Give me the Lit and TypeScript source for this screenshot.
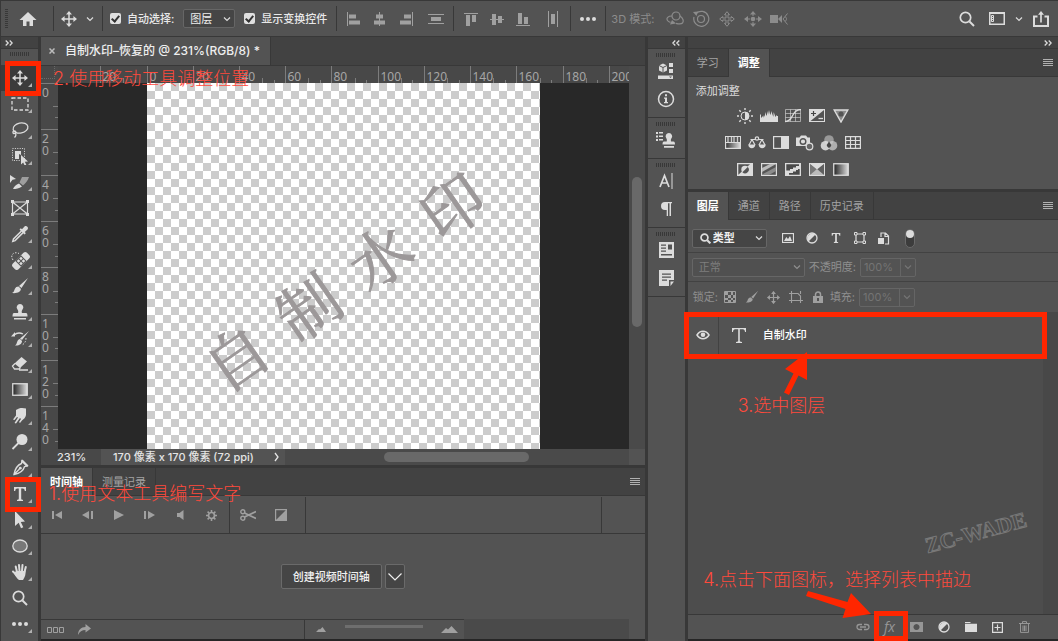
import { LitElement, html, svg, css, TemplateResult } from "lit";
import { customElement, property } from "lit/decorators.js";

/* ---------- icon artwork, keyed by name: [width, height, content] ---------- */
type Art = [number, number, TemplateResult];

const arrows4 = svg`<path d="M8 1v14M1 8h14" stroke="currentColor" stroke-width="1.5"/><path d="M8 0l3 3.6H5zM8 16l3-3.6H5zM0 8l3.6-3v6zM16 8l-3.6-3v6z" fill="currentColor"/>`;
const half = svg`<circle cx="7" cy="7" r="5" fill="none" stroke="currentColor" stroke-width="1.3"/><path d="M3.5 10.5A5 5 0 0 1 10.500 3.500z" fill="currentColor"/>`;

const ART: Record<string, Art> = {
  home: [18, 16, svg`<path fill="currentColor" d="M9 1l8.500 8H14v6h-3.500v-4.500h-3V15H4V9H.5z"/>`],
  move: [16, 16, arrows4],
  chev: [8, 6, svg`<path d="M1 1.500l3 3 3-3" fill="none" stroke="currentColor" stroke-width="1.200"/>`],
  bigchev: [14, 8, svg`<path d="M.5.5L7 7l6.500-6.500" fill="none" stroke="currentColor" stroke-width="1.200"/>`],
  fwd: [6, 10, svg`<path d="M1 1l3 4-3 4" fill="none" stroke="currentColor" stroke-width="1.300"/>`],
  dblR: [8, 6, svg`<path d="M.7.5L3.200 3 .7 5.500M4.700.5L7.200 3 4.700 5.500" fill="none" stroke="currentColor" stroke-width="1.300"/>`],
  dblL: [8, 6, svg`<path d="M3.300.5L.8 3l2.500 2.500M7.300.5L4.800 3l2.500 2.500" fill="none" stroke="currentColor" stroke-width="1.300"/>`],
  menu: [10, 8, svg`<path d="M0 .5h10M0 2.500h10M0 4.500h10M0 6.500h10" stroke="currentColor"/>`],
  close: [6, 6, svg`<path d="M.5.5l5 5M5.500.5l-5 5" stroke="currentColor" stroke-width="1.500"/>`],
  alL: [14, 14, svg`<path d="M.5 0v14" stroke="currentColor"/><path fill="currentColor" d="M2 2.500h7v4H2zM2 8.500h11v4H2z"/>`],
  alC: [14, 14, svg`<path d="M6.500 0v14" stroke="currentColor"/><path fill="currentColor" d="M3 2.500h7v4H3zM1 8.500h11v4H1z"/>`],
  alR: [14, 14, svg`<path d="M13.500 0v14" stroke="currentColor"/><path fill="currentColor" d="M5 2.500h7v4H5zM1 8.500h11v4H1z"/>`],
  disV: [16, 12, svg`<path d="M0 1.500h16M0 10.500h16" stroke="currentColor"/><path fill="currentColor" d="M3 4h10v4H3z"/>`],
  alT: [14, 14, svg`<path d="M0 1.500h14" stroke="currentColor"/><path fill="currentColor" d="M2 3h4v11H2zM8 3h4v7H8z"/>`],
  alM: [14, 14, svg`<path d="M0 7.500h14" stroke="currentColor"/><path fill="currentColor" d="M2 2h4v11H2zM8 4h4v7H8z"/>`],
  alB: [14, 14, svg`<path d="M0 13.500h14" stroke="currentColor"/><path fill="currentColor" d="M2 1h4v11H2zM8 5h4v7H8z"/>`],
  disH: [10, 16, svg`<path d="M.5 0v16M9.500 0v16" stroke="currentColor"/><path fill="currentColor" d="M3 3h4v10H3z"/>`],
  dots: [16, 4, svg`<circle cx="2" cy="2" r="2" fill="currentColor"/><circle cx="8" cy="2" r="2" fill="currentColor"/><circle cx="14" cy="2" r="2" fill="currentColor"/>`],
  orbit: [18, 16, svg`<g fill="none" stroke="currentColor" stroke-width="1.200"><circle cx="10" cy="5" r="4"/><path d="M6 5C2 5 0 7 1.500 9.500c.6 1 1.500 1.500 3 1.800M14 5c3 2 4 5 2.500 7-1 1-4 1-6.500.3"/></g><path d="M6 9l4 3.500-6 1z" fill="currentColor"/>`],
  roll: [18, 18, svg`<g fill="none" stroke="currentColor" stroke-width="1.200"><circle cx="9" cy="9" r="3.500"/><path d="M4 3.500A7.500 7.500 0 1 1 2 7"/></g><path d="M1 2l5-.5L4.500 6z" fill="currentColor"/>`],
  pan3: [16, 16, svg`<path d="M8 .7l2.500 3H9v3.300h3.300V5.500l3 2.500-3 2.500V9H9v3.300h1.500l-2.500 3-2.500-3H7V9H3.700v1.500L.7 8l3-2.500V7H7V3.700H5.500z" fill="none" stroke="currentColor"/>`],
  slide3: [18, 16, svg`<g fill="currentColor"><path d="M9 0l3 3.500H6zM9 16l3-3.500H6zM0 8l4-3v6zM18 8l-4-3v6z"/><circle cx="9" cy="8" r="2.300"/><path d="M8.500 2h1v3h-1zM8.500 11h1v3h-1zM3 7.500h3v1H3zM12 7.500h3v1h-3z"/></g>`],
  cam3: [18, 12, svg`<path fill="currentColor" d="M0 2h8v8H0zM8 6l4-4v8z"/><path d="M17.500.5L13 6l4.500 5.500M15 3.500c2 1.500 2 3.500 0 5" fill="none" stroke="currentColor"/>`],
  search: [16, 16, svg`<circle cx="6.500" cy="6.500" r="5.200" fill="none" stroke="currentColor" stroke-width="1.700"/><path d="M10.500 10.500L15 15" stroke="currentColor" stroke-width="2"/>`],
  work: [16, 13, svg`<rect x=".75" y=".75" width="14.500" height="11.500" fill="none" stroke="currentColor" stroke-width="1.500"/><path d="M0 0h16v2H0z" fill="currentColor"/><path fill="none" stroke="currentColor" d="M2.500 3.500h2v2h-2zM2.500 5.500h2v2h-2zM2.500 7.500h2v2h-2z"/>`],
  share: [16, 16, svg`<path d="M4.500 5.500H1V15h14V5.500h-3.500" fill="none" stroke="currentColor" stroke-width="2"/><path d="M8 11.500V2" stroke="currentColor" stroke-width="1.700"/><path d="M8 0l3 3.800H5z" fill="currentColor"/>`],
  marquee: [18, 14, svg`<rect x="1" y="1" width="16" height="12" fill="none" stroke="currentColor" stroke-width="1.300" stroke-dasharray="3.500 2"/>`],
  lasso: [18, 18, svg`<g fill="none" stroke="currentColor" stroke-width="1.300"><ellipse cx="9.500" cy="7" rx="7.500" ry="5" transform="rotate(-12 9.500 7)"/><path d="M3 9.500c-2 1.500-1 3.500.7 3s1.600-2.500-.4-2.500M4 12c1.500 1 1 3-.5 4.500"/></g>`],
  quick: [18, 18, svg`<rect x="1.500" y="1.500" width="12" height="12" fill="none" stroke="currentColor" stroke-dasharray="1 1.400"/><path fill="currentColor" d="M4 4h6v4L8 7v5H4z"/><path fill="currentColor" d="M10 8l7 6.500-3.200.3 1.500 3-1.700.7-1.400-3L10 17.500z"/>`],
  slice: [20, 16, svg`<path fill="currentColor" d="M0 1l6 4-3.500.7L0 9zM9 9.500l3 3c-3 2-6 2.500-9 2.500 1-2.500 3-4.500 6-5.500z"/><path d="M9.500 8.500L12 3h7c-1 3-3 6-6 8.500z" fill="currentColor" opacity=".55"/>`],
  frame: [18, 16, svg`<path d="M1.500 2h15v12h-15zM1.500 2l15 12M16.500 2l-15 12" fill="none" stroke="currentColor" stroke-width="1.200"/><path fill="currentColor" d="M0 0h3v3H0zM15 0h3v3h-3zM0 13h3v3H0zM15 13h3v3h-3z"/>`],
  dropper: [18, 18, svg`<path d="M10.500 6l-8 8-.7 2.300 2.300-.7 8-8" fill="none" stroke="currentColor" stroke-width="1.500"/><path fill="currentColor" d="M8.500 4.500l1.300-1.300 1.200 1 2.500-2.700c2-1.600 4.500 1 3 3l-2.700 2.500 1 1.200-1.300 1.300z"/>`],
  heal: [20, 20, svg`<path d="M3 10C-.5 5 4 1 9 3.500" fill="none" stroke="currentColor" stroke-dasharray="1.500 1.500"/><g transform="rotate(-45 11 11)"><rect x="1" y="7" width="20" height="8" rx="2.500" fill="currentColor"/><rect x="7" y="7" width="8" height="8" fill="#535353"/><g fill="currentColor"><path d="M8 8h2.500v2.500H8zM11.500 8H14v2.500h-2.500zM8 11.500h2.500V14H8zM11.500 11.500H14V14h-2.500z"/></g></g>`],
  brush: [18, 18, svg`<path fill="currentColor" d="M17 1l-6.500 10-2.500-2zM7.500 9.500l2.300 2.200c.5 3-4 5-8.800 4.300 2-.8 2-2 2.800-4 .7-1.700 2-2.500 3.700-2.500z"/>`],
  stamp: [16, 18, svg`<path fill="currentColor" d="M8 1a3.300 3.300 0 0 1 2.500 5.500C9.500 8 9.600 9 10 10h4c1 0 1.500 1 1.500 3.500H.5C.5 11 1 10 2 10h4c.4-1 .5-2-.5-3.500A3.300 3.300 0 0 1 8 1zM2 15h12v1.600H2z"/>`],
  histb: [20, 18, svg`<path fill="currentColor" d="M19 2l-7 9-2-1.500zM10 10l2 2c0 3-3 5-7 4.500 1.500-1 1.500-2 2.300-4 .5-1.500 1.500-2.500 2.700-2.500zM5 3v4.500H1z"/><path d="M4 6c3-2.500 6-2.500 9-1" fill="none" stroke="currentColor" stroke-width="1.300"/><path d="M16 9c0 4-2 6-4 7" fill="none" stroke="currentColor" stroke-dasharray="1.500 1.500"/>`],
  eraser: [18, 16, svg`<path fill="currentColor" d="M10.500 1L16 5.500l-7 6.500L3.500 7.500z"/><path d="M4 7.500L1.500 10l2 3H8l1.500-1.500M8 14h9" fill="none" stroke="currentColor" stroke-width="1.300"/>`],
  grad: [16, 14, svg`<defs><linearGradient id="gr"><stop offset="0" stop-color="#222"/><stop offset="1" stop-color="#ddd"/></linearGradient></defs><rect x=".75" y=".75" width="14.500" height="11.500" fill="url(#gr)" stroke="currentColor" stroke-width="1.300"/>`],
  smudge: [16, 18, svg`<path fill="currentColor" d="M4 3c3-2.500 7-2.500 10-1.500V8c-.5 2.500-2 4-4 5.500l-2 2.500-1-1 2-3-1-1-4 5.500-1.500-.5L6 10.500 5 10l-2.500 3L1 12.500 4 8.500z"/>`],
  dodge: [18, 18, svg`<circle cx="11" cy="6.500" r="5.500" fill="currentColor"/><path d="M7.500 10L1.500 16" stroke="currentColor" stroke-width="1.800"/>`],
  pen: [18, 18, svg`<path d="M11 2l5 5-2.500.7c-1 4-5 6.800-10.500 7.800C4 10 6.500 6 10.500 4.500zM3 15.500L8.500 10" fill="none" stroke="currentColor" stroke-width="1.400"/><circle cx="9.300" cy="9.200" r="1.400" fill="currentColor"/><path fill="currentColor" d="M11.500.5l6 6-1.500 1.500-6-6z"/>`],
  type: [14, 14, svg`<path fill="currentColor" d="M1 0h12v4h-1.200c-.2-1.700-.8-2.500-2.300-2.500H8.200v10c0 1 .4 1.200 1.800 1.300V14H4v-1.200c1.400-.1 1.800-.3 1.800-1.300v-10H4.500C3 1.500 2.400 2.300 2.200 4H1z"/>`],
  pick: [14, 18, svg`<path fill="currentColor" d="M2 0l10 10.500-4.200.4 2.500 5.300-2.300 1-2.300-5.400L2 15z"/>`],
  ell: [16, 14, svg`<ellipse cx="8" cy="7" rx="7.200" ry="6" fill="#787878" stroke="currentColor" stroke-width="1.300"/>`],
  hand: [18, 18, svg`<g stroke="currentColor" stroke-width="2" stroke-linecap="round"><path d="M6 9L4.700 3.500M8.500 8L8 2M11 8l.5-6M13.500 9l1.300-5M5.500 12L2 8.500"/></g><path fill="currentColor" d="M5 8h9.500c.3 3.500-.5 6-2.500 9H8c-2-1.500-4-4.500-5-6.500z"/>`],
  tri: [4, 4, svg`<path d="M4 0v4H0z" fill="currentColor"/>`],
  props: [16, 16, svg`<path d="M5 .5L9 2.500v5L5 9.500l-4-2v-5z" fill="currentColor"/><path d="M1 2.500l4 2 4-2M5 4.500v5" stroke="#535353" fill="none"/><path fill="currentColor" d="M11 0h4v4h-4zM11 6h4v4h-4zM0 12.500h15V16H0z"/><path d="M11 13.500h3l-1.500 1.500z" fill="#535353"/>`],
  info: [18, 18, svg`<circle cx="9" cy="9" r="7.500" fill="none" stroke="currentColor" stroke-width="1.500"/><path fill="currentColor" d="M8 4.200h2v2H8zM7 7.500h3V12h1v1.200H7V12h1V8.700H7z"/>`],
  clone: [20, 16, svg`<path fill="currentColor" d="M13 1a3.300 3.300 0 0 1 2.500 5.300c-.8 1-.7 2-.5 3.200h2.500c1 0 1.500 1 1.500 3H6.500c0-2 .5-3 1.500-3h2.700c.3-1.200.3-2.200-.4-3.200A3.300 3.300 0 0 1 13 1zM8 14h10v1.800H8z"/><path fill="currentColor" d="M0 0h2v2H0zM3 0h4v1.500H3zM0 3.500h2v2H0zM3 3.500h4V5H3zM0 7h2v2H0zM3 7h4v1.500H3z"/>`],
  charp: [14, 16, svg`<path d="M1 14L5.500 2.500 10 14M2.800 10h5.400" fill="none" stroke="currentColor" stroke-width="1.700"/><path d="M13 0v16" stroke="currentColor"/>`],
  para: [12, 16, svg`<path fill="currentColor" d="M5 1h7v1.200h-1V15H9.500V2.200H8V15H6.700V9H5a4 4 0 0 1 0-8z"/>`],
  lib: [15, 16, svg`<path fill="currentColor" fill-rule="evenodd" d="M0 0h15v16H0zM2 2.500v1.200h5V2.500zM2 5.500v1.200h5V5.500zM2 8.500v1.200h5V8.500zM9 2.500v5h4v-5zM2 12v1.500h11V12z"/>`],
  note: [15, 16, svg`<path fill="currentColor" fill-rule="evenodd" d="M0 0h15v10l-5 0v6H0zM3 3.500v1.200h9V3.500zM3 6.500v1.200h9V6.500zM3 9.500v1.200h5V9.500zM11.500 11.500H15L11.500 16z"/>`],
  sun: [18, 16, svg`<g stroke="currentColor" stroke-width="1.400"><path d="M9 0v2M9 14v2M1 8h2M15 8h2M3.300 2.300l1.500 1.500M13.200 12.200l1.500 1.500M3.300 13.700l1.500-1.500M13.200 3.800l1.500-1.500"/></g><circle cx="9" cy="8" r="4" fill="none" stroke="currentColor"/><path d="M9 4a4 4 0 0 1 0 8z" fill="currentColor"/>`],
  levels: [18, 12, svg`<path fill="currentColor" d="M0 12V5l1-1v4l2-2v2l1-3 1 2V2l1.500 4L8 1v4l1-5 1.200 5L12 1v5l1.500-4v5L15 3v4l2-2v1h1v6z"/>`],
  curves: [16, 14, svg`<path d="M.5.5h15v12H.5zM5.500.5v12M10.500.5v12M.5 4.500h15M.5 8.500h15" fill="none" stroke="currentColor" opacity=".6"/><path d="M0 12.500c9 0 6-12 16-12" fill="none" stroke="currentColor" stroke-width="1.300"/>`],
  expo: [16, 13, svg`<path fill="currentColor" d="M0 0h16v13H0z"/><path d="M15 1v11H1.500z" fill="#535353"/><path d="M2 4.500h5M4.500 2v5" stroke="#444" stroke-width="1.200"/><path d="M9.500 9.500H14" stroke="currentColor" stroke-width="1.300"/>`],
  vib: [16, 14, svg`<path d="M1.200 1h13.600L8 13z" fill="#8a8a8a" stroke="currentColor" stroke-width="1.400"/><circle cx="8" cy="5" r="2.600" fill="#555"/>`],
  hue: [16, 13, svg`<defs><linearGradient id="gr2"><stop offset="0" stop-color="#333"/><stop offset="1" stop-color="#ddd"/></linearGradient></defs><rect x=".6" y=".6" width="14.800" height="11.800" fill="url(#gr2)" stroke="currentColor" stroke-width="1.200"/><path d="M1 1h14v5H1z" fill="#555"/><path d="M3 1v5M6.500 1v5M9 1v5M12.500 1v5" stroke="#ccc" stroke-width="1.300"/><path d="M1 6.500h14" stroke="currentColor"/>`],
  balance: [18, 14, svg`<g fill="none" stroke="currentColor" stroke-width="1.200"><circle cx="9" cy="2.500" r="1.700"/><path d="M2.500 3.500h5M10.500 3.500h5M4 3.500L1 9M4 3.500L7 9M14 3.500L11 9M14 3.500L17 9"/></g><path fill="currentColor" d="M.3 8.500h7c0 5-7 5-7 0zM10.700 8.500h7c0 5-7 5-7 0z"/>`],
  bw: [16, 13, svg`<rect x=".6" y=".6" width="14.800" height="11.800" fill="none" stroke="currentColor" stroke-width="1.200"/><path fill="currentColor" d="M8 0h8v13H8z"/>`],
  photo: [18, 16, svg`<path fill="currentColor" d="M0 2.500h3.500L5 .5h5l1.500 2H14V11H0z"/><circle cx="7" cy="6.500" r="2.800" fill="currentColor" stroke="#535353" stroke-width="1.400"/><circle cx="13.500" cy="11.500" r="3.300" fill="#666" stroke="currentColor" stroke-width="1.200"/>`],
  mixer: [18, 16, svg`<circle cx="9" cy="5" r="4.800" fill="#999"/><circle cx="5.500" cy="10.700" r="4.800" fill="#ddd" opacity=".9"/><circle cx="12.500" cy="10.700" r="4.800" fill="#ccc" opacity=".75"/><path d="M9 6.500l2.300 3.500c-.5 2-1.300 2.500-2.300 3-1-.5-1.800-1-2.300-3z" fill="#444"/>`],
  table: [16, 13, svg`<path d="M.6.6h14.800v11.800H.6zM5.500 1v11M10.500 1v11M1 4.500h14M1 8.500h14" fill="none" stroke="currentColor" stroke-width="1.200"/>`],
  invert: [16, 13, svg`<path fill="currentColor" d="M0 0h16v13H0z"/><path d="M1.300 11.700V1.300H13z" fill="#535353"/><circle cx="8" cy="6.500" r="3.700" fill="currentColor"/><path d="M10.700 4A3.700 3.700 0 0 1 5.400 9.200z" fill="#535353"/>`],
  poster: [16, 13, svg`<rect x=".6" y=".6" width="14.800" height="11.800" fill="#555" stroke="currentColor" stroke-width="1.200"/><path d="M1 5L9 1h6L1 9z" fill="#bbb"/><path d="M1 11.500L15 4v4l-7 4H1z" fill="#8c8c8c"/>`],
  thresh: [16, 13, svg`<path fill="currentColor" d="M0 0h16v13H0z"/><path d="M1.300 1.300H14V3h-3v1.500H8V6H5v1.500H1.300zM14.700 6v5.700H4V10h4V8.500h3V7h2V6z" fill="#4a4a4a"/>`],
  selcol: [16, 13, svg`<rect x=".6" y=".6" width="14.800" height="11.800" fill="#777" stroke="currentColor" stroke-width="1.200"/><path d="M1 1h14L8 7z" fill="#ddd"/><path d="M1 1l7 5.500L1 12z" fill="#777"/><path d="M15 1L8 6.500l7 5.500z" fill="#606060"/><path d="M1 12l7-6 7 6z" fill="#bbb"/>`],
  img: [12, 10, svg`<rect x=".5" y=".5" width="11" height="9" fill="none" stroke="currentColor" stroke-width="1.200"/><path fill="currentColor" d="M2 8l2.300-4L6 6l2-3 2 5z"/>`],
  half: [14, 14, half],
  shape: [12, 12, svg`<path d="M2 2h8v8H2z" fill="none" stroke="currentColor" stroke-width="1.200"/><g fill="#535353" stroke="currentColor"><path d="M.5.5h2.500V3H.5zM9 .5h2.500V3H9zM.5 9H3v2.500H.5zM9 9h2.500v2.500H9z"/></g>`],
  smart: [12, 13, svg`<path d="M3 5V1h4.500L10.500 4v8H7M7 1v3.500h3.500" fill="none" stroke="currentColor" stroke-width="1.200"/><path fill="currentColor" d="M0 6h6v6H0z"/>`],
  checks: [12, 12, svg`<path d="M.5.5h11v11H.5z" fill="none" stroke="currentColor"/><path fill="currentColor" d="M1 1h3v3H1zM7 1h2v3H7zM4 4h3v3H4zM9 4h2v3H9zM1 7h3v2H1zM7 7h2v2H7zM4 9h3v2H4zM9 9h2v2H9z"/>`],
  crop: [14, 12, svg`<path d="M2.500 0v12M0 2.500h9l2.500 2.500v7M0 9.500h14M11.500 0v3" fill="none" stroke="currentColor" stroke-width="1.100"/>`],
  lock: [10, 12, svg`<path d="M2.500 5V3.500a2.500 2.500 0 0 1 5 0V5" fill="none" stroke="currentColor" stroke-width="1.500"/><path fill="currentColor" fill-rule="evenodd" d="M0 5h10v7H0zM4 7v3h2V7z"/>`],
  eye: [14, 10, svg`<path d="M1 5c3-5 9-5 12 0-3 5-9 5-12 0z" fill="none" stroke="currentColor" stroke-width="1.500"/><circle cx="7" cy="4.800" r="2.300" fill="currentColor"/>`],
  typeL: [14, 15, svg`<path fill="currentColor" d="M0 0h14v4h-1c-.2-1.800-.7-2.700-2.200-2.700H7.800v11.400c0 .8.400 1 2.200 1.200V15H4v-1.100c1.800-.2 2.200-.4 2.200-1.200V1.300h-3C1.700 1.300 1.200 2.200 1 4H0z"/>`],
  link: [14, 8, svg`<path d="M6 1.500H3.500a2.500 2.500 0 0 0 0 5H6M8 1.500h2.500a2.500 2.500 0 0 1 0 5H8M4 4h6" fill="none" stroke="currentColor" stroke-width="1.300"/>`],
  mask: [13, 10, svg`<path fill="currentColor" fill-rule="evenodd" d="M0 0h13v10H0zM6.500 2a3 3 0 1 0 .01 0z"/>`],
  folder: [12, 10, svg`<path fill="currentColor" d="M0 0h5l1 1H0zM0 1.800h12V10H0z"/>`],
  plus: [11, 11, svg`<path d="M.6.6h9.800v9.800H.6zM5.500 2.500v6M2.500 5.500h6" fill="none" stroke="currentColor" stroke-width="1.200"/>`],
  trash: [11, 12, svg`<path d="M0 2.500h11M3.500 2V.6h4V2M1.500 3v8.400h8V3M4 4.500v5.500M5.500 4.500v5.500M7 4.500v5.500" fill="none" stroke="currentColor"/>`],
  first: [10, 8, svg`<path fill="currentColor" d="M0 0h2v8H0zM10 0v8L3 4z"/>`],
  prev: [11, 8, svg`<path fill="currentColor" d="M7 0v8L0 4zM9 0h2v8H9z"/>`],
  play: [10, 10, svg`<path fill="currentColor" d="M0 0l10 5-10 5z"/>`],
  next: [11, 8, svg`<path fill="currentColor" d="M0 0h2v8H0zM4 0l7 4-7 4z"/>`],
  snd: [7, 10, svg`<path fill="currentColor" d="M0 3h2.500L6.500 0v10L2.500 7H0z"/>`],
  gear: [11, 11, svg`<circle cx="5.500" cy="5.500" r="3" fill="none" stroke="currentColor" stroke-width="1.700"/><path d="M5.500 0v2M5.500 9v2M0 5.500h2M9 5.500h2M1.600 1.600L3 3M8 8l1.400 1.400M1.600 9.400L3 8M8 3l1.400-1.400" stroke="currentColor" stroke-width="1.600"/>`],
  scissors: [16, 12, svg`<g fill="none" stroke="currentColor" stroke-width="1.400"><circle cx="2.800" cy="2.800" r="2"/><circle cx="2.800" cy="9.200" r="2"/></g><path d="M4.500 4L16 9.500M4.500 8L16 2.500" stroke="currentColor" stroke-width="1.700"/>`],
  trans: [12, 12, svg`<path d="M.6.6h10.800v10.800H.6z" fill="none" stroke="currentColor" stroke-width="1.200"/><path fill="currentColor" d="M12 0v12H0z"/>`],
  frames: [17, 6, svg`<path d="M.5.5h4v5h-4zM6.500.5h4v5h-4zM12.500.5h4v5h-4z" fill="none" stroke="currentColor"/>`],
  redo: [13, 11, svg`<path fill="currentColor" d="M7.500 0L13 4.500l-5.500 4V6C4 6 1.500 7.500 0 11c0-5 3-8 7.500-8z"/>`],
  mtS: [10, 5, svg`<path fill="currentColor" d="M0 5l3-3 1 .5L6.500 0 10 5z"/>`],
  mtL: [17, 7, svg`<path fill="currentColor" d="M0 7l5-5 2 1.500L10.500 0 17 7z"/>`],
};

const ico = (name: string) => {
  const [w, h, art] = ART[name];
  return html`<svg class="ico" width=${w} height=${h} viewBox="0 0 ${w} ${h}" aria-hidden="true">${art}</svg>`;
};

const base = css`
  :host, * { box-sizing: border-box; }
  button, input, select { font: inherit; color: inherit; margin: 0; padding: 0; border: 0; background: none; border-radius: 0; outline: none; }
  button { display: flex; align-items: center; justify-content: center; }
  .ico { display: block; flex: none; }
  .grip { height: 4px; background: repeating-linear-gradient(90deg, #383838 0 1px, transparent 1px 2px); flex: none; }
  .pick { display: grid; align-items: center; border: 1px solid #666; border-radius: 2px; background: #454545; height: 19px; }
  .pick > * { grid-area: 1 / 1; }
  .pick select { appearance: none; width: 100%; height: 17px; color: #eee; }
  .pick .ico { pointer-events: none; }
  .pick .end { justify-self: end; margin-right: 3px; }
  .note { position: absolute; white-space: nowrap; font-size: 18px; line-height: 24px; font-weight: 300; color: #ff4a3c; pointer-events: none; z-index: 5; }
  .tabs { display: flex; background: #424242; border-bottom: 1px solid #383838; height: 28px; align-items: stretch; flex: none; }
  .tabs button { border-right: 1px solid #383838; color: #a3a3a3; padding: 0 9px; }
  .tabs button.on { background: #535353; color: #fff; font-weight: 700; margin-bottom: -1px; }
  .tabs .menu { margin-left: auto; border: 0; width: 20px; padding: 0; color: #b0b0b0; }
`;

/* ---------- options bar along the top ---------- */
@customElement("options-bar")
export class OptionsBar extends LitElement {
  static styles = [base, css`
    :host { display: flex; align-items: center; height: 37px; flex: none; border-top: 1px solid #383838; border-bottom: 1px solid #383838; border-left: 1px solid #383838; background: #535353; color: #dcdcdc; }
    .grp { display: flex; align-items: center; height: 25px; border-right: 1px solid #383838; flex: none; }
    .handle { width: 3px; height: 20px; margin: 0 5px 0 4px; background: repeating-linear-gradient(#383838 0 1px, transparent 1px 2px); }
    .home { width: 30px; margin-right: 10px; }
    .tool { width: 26px; height: 25px; }
    .mv { margin-left: 2px; }
    .drop { width: 16px; margin-right: 4px; height: 25px; }
    .opts { padding: 0 9px 0 7px; }
    label { display: flex; align-items: center; gap: 6px; color: #e8e8e8; font-weight: 500; }
    input { appearance: none; width: 11px; height: 11px; border-radius: 2px; background: #e0e0e0; display: grid; place-items: center; }
    input:checked::before { content: ""; width: 3px; height: 6px; margin-top: -2px; border: solid #333; border-width: 0 2px 2px 0; transform: rotate(40deg); }
    .pick { width: 52px; margin: 0 9px; }
    .pick select { padding-left: 6px; }
    .align { padding: 0 4px; color: #a0a0a0; }
    .align .tool:last-child { margin-left: 4px; }
    .more { padding: 0 4px; }
    .mode { color: #8c8c8c; display: flex; align-items: center; padding-left: 5px; flex: none; }
    .mode .tool:first-of-type { margin-left: 8px; }
    .right { margin-left: auto; display: flex; align-items: center; padding-right: 2px; }
    .right .tool { width: 30px; }
    .right .drop { width: 14px; margin: 0; }
  `];
  render() {
    const tools = (names: string[]) => names.map((n) => html`<button class="tool" aria-label=${n}>${ico(n)}</button>`);
    return html`
      <div class="grp"><span class="handle"></span><button class="home" aria-label="home">${ico("home")}</button></div>
      <div class="grp"><button class="tool mv" aria-label="move">${ico("move")}</button><button class="drop" aria-label="presets">${ico("chev")}</button></div>
      <div class="grp opts">
        <label><input type="checkbox" checked />自动选择:</label>
        <span class="pick"><select aria-label="自动选择"><option>图层</option></select><span class="end">${ico("chev")}</span></span>
        <label><input type="checkbox" checked />显示变换控件</label>
      </div>
      <div class="grp align">${tools(["alL", "alC", "alR", "disV"])}</div>
      <div class="grp align">${tools(["alT", "alM", "alB", "disH"])}</div>
      <div class="grp more">${tools(["dots"])}</div>
      <div class="mode">3D 模式: ${tools(["orbit", "roll", "pan3", "slide3", "cam3"])}</div>
      <div class="right">${tools(["search", "work"])}<button class="drop" aria-label="workspace">${ico("chev")}</button>${tools(["share"])}</div>
    `;
  }
}

/* ---------- tool column ---------- */
@customElement("tool-box")
export class ToolBox extends LitElement {
  static styles = [base, css`
    :host { display: flex; flex-direction: column; width: 39px; border: solid #383838; border-width: 0 1px; background: #535353; color: #dcdcdc; flex: none; }
    .head { height: 12px; background: #424242; border-bottom: 1px solid #383838; display: flex; align-items: center; padding-left: 4px; }
    .grip { width: 20px; margin: 3px auto 9px 9px; }
    .tool { position: relative; height: 26px; padding-left: 1px; }
    .tool.on { background: #3b3b3b; }
    .corner { position: absolute; right: 6px; bottom: 4px; color: #b0b0b0; }
    .box { position: absolute; inset: -4px -3px -5px 4px; border: 5px solid #ff2600; z-index: 4; pointer-events: none; }
  `];
  render() {
    const names = ["move", "marquee", "lasso", "quick", "slice", "frame", "dropper", "heal", "brush", "stamp", "histb", "eraser", "grad", "smudge", "dodge", "pen", "type", "pick", "ell", "hand", "search", "dots"];
    return html`
      <div class="head">${ico("dblR")}</div>
      <div class="grip"></div>
      ${names.map((n) => html`<button class="tool ${n === "move" ? "on" : ""}" aria-label=${n}>
        ${ico(n)}
        ${n === "frame" || n === "search" ? "" : html`<span class="corner">${ico("tri")}</span>`}
        ${n === "move" || n === "type" ? html`<span class="box"></span>` : ""}
      </button>`)}
    `;
  }
}

/* ---------- rulers: ticks spaced by the zoom factor ---------- */
@customElement("px-ruler")
export class PxRuler extends LitElement {
  @property() axis = "x";
  @property({ type: Number }) origin = 0;
  @property({ type: Number }) first = 0;
  @property({ type: Number }) last = 10;
  static styles = css`
    :host { display: block; overflow: hidden; background: #484848; min-width: 0; min-height: 0; }
    svg { display: block; width: 100%; height: 100%; }
    text { font: 12px "Noto Sans", sans-serif; fill: #a6a6a6; }
    path { stroke: #7c7c7c; }
  `;
  render() {
    const step = 46.24;
    const horizontal = this.axis === "x";
    const marks = Array.from({ length: this.last - this.first + 1 }, (_, i) => i + this.first);
    return html`<svg>${marks.map((i) => {
      const p = Math.floor(this.origin + i * step) + 0.5;
      const m = Math.floor(this.origin + (i + 0.5) * step) + 0.5;
      const q = Math.floor(this.origin + (i + 0.75) * step) + 0.5;
      const label = String(Math.abs(i * 20));
      return horizontal
        ? svg`<path d="M${p} 0v18M${m} 12v6M${q} 14v4"/><text x=${p + 2} y="15">${label}</text>`
        : svg`<path d="M0 ${p}h18M12 ${m}h6M14 ${q}h4"/>${[...label].map((c, k) => svg`<text x="1" y=${p + 13 + k * 12}>${c}</text>`)}`;
    })}</svg>`;
  }
}

/* ---------- document window ---------- */
@customElement("document-view")
export class DocumentView extends LitElement {
  static styles = [base, css`
    :host { position: relative; display: flex; flex-direction: column; flex: 1; min-height: 0; }
    .tabs { height: 29px; }
    .tabs button.on { padding: 0 10px 0 8px; gap: 10px; font-size: 12px; font-weight: 500; color: #eee; margin: 0; }
    .tabs .ico { color: #bbb; }
    .work { flex: 1; min-height: 0; display: grid; grid-template: 17px minmax(0, 1fr) 16px / 17px minmax(0, 1fr) 16px; background: #4a4a4a; }
    .corner { border: dotted #6a6a6a; border-width: 0 1px 1px 0; background: #484848; margin: 0 3px 4px 0; }
    .stage { background: #282828; overflow: hidden; min-height: 0; }
    .art { width: 393px; height: 393px; margin-left: 89px; background: repeating-conic-gradient(#ccc 0 25%, #fff 0 50%) 0 0 / 16px 16px; display: grid; place-items: center; overflow: hidden; }
    .mark { display: flex; gap: 26px; font: 62px "KaiTi", "AR PL UKai CN", "Noto Serif CJK SC", "Noto Sans CJK SC", serif; line-height: 62px; color: #9c9899; -webkit-text-stroke: 1px #9c9899; transform: rotate(-35deg); }
    .rail { grid-column: 3; grid-row: 1 / 3; padding: 111px 3px 0; }
    .thumb { height: 150px; border-radius: 5px; background: #696969; }
    .status { grid-column: 1 / 4; display: flex; align-items: stretch; color: #e4e4e4; font-weight: 500; }
    .zoom { width: 60px; padding-left: 16px; line-height: 16px; background: #484848; }
    .dims { width: 184px; background: #535353; display: flex; align-items: center; justify-content: space-between; padding: 0 5px 0 12px; line-height: 16px; }
    .hrail { flex: 1; display: flex; align-items: center; padding-left: 99px; }
    .hthumb { width: 145px; height: 10px; border-radius: 5px; background: #696969; }
    .end { width: 16px; background: #535353; }
    .n2 { left: 12px; top: 30px; }
  `];
  render() {
    return html`
      <div class="tabs"><button class="on">${ico("close")}<span>自制水印–恢复的 @ 231%(RGB/8) *</span></button></div>
      <div class="work">
        <div class="corner"></div>
        <px-ruler axis="x" origin="89" first="-1" last="10"></px-ruler>
        <div class="rail"><div class="thumb"></div></div>
        <px-ruler axis="y" origin="0" first="0" last="7"></px-ruler>
        <div class="stage"><div class="art"><div class="mark"><span>自</span><span>制</span><span>水</span><span>印</span></div></div></div>
        <div class="status">
          <span class="zoom">231%</span>
          <span class="dims">170 像素 x 170 像素 (72 ppi)${ico("fwd")}</span>
          <span class="hrail"><span class="hthumb"></span></span>
          <span class="end"></span>
        </div>
      </div>
      <span class="note n2">2.使用移动工具调整位置</span>
    `;
  }
}

/* ---------- timeline panel ---------- */
@customElement("timeline-panel")
export class TimelinePanel extends LitElement {
  static styles = [base, css`
    :host { position: relative; display: flex; flex-direction: column; background: #535353; border-top: 3px solid #383838; flex: none; color: #a0a0a0; }
    .ctl { display: flex; align-items: stretch; height: 38px; border-bottom: 1px solid #383838; padding-top: 1px; }
    .ctl button { width: 31px; }
    .play { display: flex; border-right: 1px solid #383838; width: 189px; position: relative; }
    .cut { display: flex; border-right: 1px solid #383838; width: 76px; padding-left: 2px; gap: 2px; }
    .rest { flex: 1; border-right: 1px solid #383838; margin-right: 43px; }
    .body { display: flex; justify-content: center; align-items: center; gap: 3px; height: 85px; color: #f0f0f0; }
    .body button { border: 1px solid #6a6a6a; border-radius: 2px; background: #454545; height: 25px; }
    .body .make { padding: 0 11px; font-weight: 500; }
    .body .dd { width: 20px; }
    .foot { display: flex; height: 22px; border-bottom: 2px solid #262626; background: #4a4a4a; }
    .tools { display: flex; align-items: center; width: 264px; border: solid #383838; border-width: 1px 1px 0 0; background: #535353; }
    .tools button { width: 29px; height: 18px; }
    .scale { display: flex; align-items: center; width: 159px; background: #535353; border-top: 1px solid #383838; padding: 0 6px 0 11px; justify-content: space-between; }
    input { appearance: none; width: 78px; height: 3px; background: #6e6e6e; margin-bottom: 6px; }
    input::-webkit-slider-thumb { appearance: none; width: 1px; height: 1px; }
    .pad { width: 16px; margin-left: auto; background: #535353; }
    .n1 { left: 8px; top: 14px; }
  `];
  render() {
    const b = (n: string) => html`<button aria-label=${n}>${ico(n)}</button>`;
    return html`
      <div class="tabs"><button class="on">时间轴</button><button>测量记录</button><button class="menu" aria-label="menu">${ico("menu")}</button></div>
      <div class="ctl">
        <div class="play">${["first", "prev", "play", "next", "snd", "gear"].map(b)}</div>
        <div class="cut">${["scissors", "trans"].map(b)}</div>
        <div class="rest"></div>
      </div>
      <div class="body"><button class="make">创建视频时间轴</button><button class="dd" aria-label="options">${ico("bigchev")}</button></div>
      <div class="foot">
        <div class="tools">${["frames", "redo"].map(b)}</div>
        <div class="scale">${ico("mtS")}<input type="range" aria-label="zoom" />${ico("mtL")}</div>
        <div class="pad"></div>
      </div>
      <span class="note n1">1.使用文本工具编写文字</span>
    `;
  }
}

/* ---------- collapsed panel icons ---------- */
@customElement("icon-dock")
export class IconDock extends LitElement {
  static styles = [base, css`
    :host { display: flex; flex-direction: column; width: 38px; border-right: 1px solid #383838; background: #535353; color: #dcdcdc; flex: none; }
    .head { height: 12px; background: #424242; border-bottom: 1px solid #383838; display: flex; align-items: center; justify-content: flex-end; padding-right: 5px; }
    .set { border-bottom: 1px solid #383838; padding: 4px 0; }
    .grip { width: 20px; margin: 0 auto; }
    button { width: 100%; height: 28px; }
  `];
  render() {
    const sets = [["props", "info"], ["clone"], ["charp", "para"], ["lib", "note"]];
    return html`<div class="head">${ico("dblL")}</div>
      ${sets.map((s) => html`<div class="set"><div class="grip"></div>${s.map((n) => html`<button aria-label=${n}>${ico(n)}</button>`)}</div>`)}`;
  }
}

/* ---------- adjustments panel ---------- */
@customElement("adjust-panel")
export class AdjustPanel extends LitElement {
  static styles = [base, css`
    :host { display: block; background: #535353; color: #dcdcdc; border-bottom: 3px solid #383838; flex: none; }
    .head { height: 12px; background: #424242; border-bottom: 1px solid #383838; display: flex; align-items: center; justify-content: flex-end; padding-right: 6px; }
    .title { padding: 6px 8px 3px; line-height: 16px; }
    .row { display: flex; height: 27px; padding-left: 45px; }
    .row.wide { padding-left: 33px; }
    .row button { width: 24px; }
    .body { padding-bottom: 6px; }
  `];
  render() {
    const rows = [["sun", "levels", "curves", "expo", "vib"], ["hue", "balance", "bw", "photo", "mixer", "table"], ["invert", "poster", "thresh", "selcol", "grad"]];
    return html`<div class="head">${ico("dblR")}</div>
      <div class="tabs"><button>学习</button><button class="on">调整</button><button class="menu" aria-label="menu">${ico("menu")}</button></div>
      <div class="body"><div class="title">添加调整</div>
      ${rows.map((r) => html`<div class="row ${r.length > 5 ? "wide" : ""}">${r.map((n) => html`<button aria-label=${n}>${ico(n)}</button>`)}</div>`)}</div>`;
  }
}

/* ---------- layers panel ---------- */
@customElement("layers-panel")
export class LayersPanel extends LitElement {
  static styles = [base, css`
    :host { position: relative; display: flex; flex-direction: column; flex: 1; min-height: 0; background: #535353; color: #dcdcdc; }
    .bar { display: flex; align-items: center; padding-left: 4px; height: 29px; flex: none; border-bottom: 1px solid #424242; }
    .bar.filter { height: 33px; padding-top: 4px; }
    .bar.lock { height: 30px; border: 0; color: #8f8f8f; padding-left: 5px; }
    .bar.blend { color: #8f8f8f; }
    .kind { width: 75px; }
    .kind > .ico { margin-left: 7px; }
    .kind select { padding-left: 20px; font-weight: 700; }
    .filters { display: flex; padding-left: 9px; }
    .filters button { width: 24px; height: 20px; }
    .toggle { appearance: none; width: 10px; height: 19px; border-radius: 5px; background: #3c3c3c; border: 1px solid #6a6a6a; margin-left: 9px; }
    .toggle::before { content: ""; display: block; width: 8px; height: 8px; border-radius: 4px; background: #dcdcdc; }
    .mode { width: 113px; background: #505050; margin-right: 4px; }
    .mode select { padding-left: 6px; color: #7e7e7e; }
    .amount { display: flex; border: 1px solid #656565; border-radius: 2px; height: 19px; width: 56px; color: #747474; }
    .amount input { flex: 1; min-width: 0; padding-left: 3px; }
    .amount button { width: 15px; border-left: 1px solid #656565; }
    .lab { display: flex; align-items: center; gap: 4px; }
    .locks { display: flex; padding: 0 1px; }
    .locks button { width: 22px; height: 20px; }
    .locks .ico { color: #a0a0a0; }
    .list { flex: 1; background: linear-gradient(90deg, #4d4d4d calc(100% - 15px), #484848 0); }
    .layer { position: relative; display: flex; align-items: center; height: 46px; margin-right: 15px; background: #535353; }
    .eye { width: 31px; height: 100%; border-right: 1px solid #424242; }
    .layer .typ { width: 40px; display: flex; justify-content: center; }
    .name { margin-left: 4px; font-weight: 500; color: #fff; }
    .box { position: absolute; inset: 0 -4px -1px -4px; border: 5px solid #ff2600; pointer-events: none; z-index: 4; }
    .foot { display: flex; justify-content: flex-end; height: 27px; flex: none; border-top: 1px solid #383838; border-bottom: 2px solid #262626; padding-right: 20px; }
    .foot button { width: 27px; position: relative; }
    .dim { color: #969696; }
    .foot .fx { font: italic 14px/16px "Open Sans", "Noto Sans", sans-serif; }
    .fx .box { inset: -4px -5px -2px -2px; }
    .n3 { left: 50px; top: 202px; }
    .n4 { right: 87px; bottom: 49px; }
    .arrow { position: absolute; fill: #ff2600; z-index: 4; pointer-events: none; }
    .a3 { left: 94px; top: 160px; }
    .a4 { right: 186px; bottom: 20px; }
    .sign { position: absolute; right: 30px; bottom: 96px; font: 700 22px "Liberation Serif", serif; line-height: 24px; color: #4d4d4d; -webkit-text-stroke: 1px #787878; transform: rotate(-15deg); pointer-events: none; }
  `];
  render() {
    const b = (n: string, dim = false) => html`<button class=${dim ? "dim" : ""} aria-label=${n}>${ico(n)}</button>`;
    const amount = (label: string) => html`<label class="lab">${label}<span class="amount"><input value="100%" /><button aria-label="${label} menu">${ico("chev")}</button></span></label>`;
    return html`
      <div class="tabs"><button class="on">图层</button><button>通道</button><button>路径</button><button>历史记录</button><button class="menu" aria-label="menu">${ico("menu")}</button></div>
      <div class="bar filter">
        <span class="pick kind"><svg class="ico" width="11" height="11" viewBox="0 0 16 16"><circle cx="6.500" cy="6.500" r="5" fill="none" stroke="currentColor" stroke-width="2.500"/><path d="M10.500 10.500L15 15" stroke="currentColor" stroke-width="3"/></svg><select aria-label="filter"><option>类型</option></select><span class="end">${ico("chev")}</span></span>
        <div class="filters">${b("img")}${b("half")}<button aria-label="type"><svg class="ico" width="10" height="10" viewBox="0 0 14 14">${ART.type[2]}</svg></button>${b("shape")}${b("smart")}</div>
        <input class="toggle" type="checkbox" aria-label="filter on" checked />
      </div>
      <div class="bar blend">
        <span class="pick mode"><select aria-label="mode"><option>正常</option></select><span class="end">${ico("chev")}</span></span>
        ${amount("不透明度:")}
      </div>
      <div class="bar lock">
        锁定:<div class="locks">${b("checks")}<button aria-label="brush"><svg class="ico" width="14" height="14" viewBox="0 0 18 18">${ART.brush[2]}</svg></button><button aria-label="position"><svg class="ico" width="13" height="13" viewBox="0 0 16 16">${arrows4}</svg></button>${b("crop")}${b("lock")}</div>
        ${amount("填充:")}
      </div>
      <div class="list">
        <div class="layer"><button class="eye" aria-label="visible">${ico("eye")}</button><span class="typ">${ico("typeL")}</span><span class="name">自制水印</span><span class="box"></span></div>
      </div>
      <div class="foot">${b("link", true)}<button class="dim fx">fx<span class="box"></span></button>${b("mask", true)}${b("half")}${b("folder")}${b("plus")}${b("trash", true)}</div>
      <span class="note n3">3.选中图层</span>
      <span class="note n4">4.点击下面图标，选择列表中描边</span>
      <svg class="arrow a3" width="28" height="46" viewBox="0 0 28 46"><path d="M25 0v28l-8.500-4.500L7 43l-5-2.500L11.500 21.500 3 17z"/></svg>
      <svg class="arrow a4" width="68" height="30" viewBox="0 0 68 30"><path d="M67 23L47 2l-3.500 9L4 0 2 5l39.500 13-3 9z"/></svg>
      <span class="sign">ZC-WADE</span>
    `;
  }
}

@customElement("app-root")
export class AppRoot extends LitElement {
  static styles = css`
    :host { display: flex; flex-direction: column; height: 100vh; overflow: hidden; background: #383838; font: 11px/16px "Inter", "Noto Sans CJK SC", sans-serif; }
    .main { flex: 1; min-height: 0; display: flex; }
    .center { flex: 1; min-width: 0; display: flex; flex-direction: column; margin: 0 3px 0 2px; }
    .side { width: 35%; display: flex; flex-direction: column; margin-left: 2px; }
  `;
  render() {
    return html`
      <options-bar></options-bar>
      <div class="main">
        <tool-box></tool-box>
        <div class="center"><document-view></document-view><timeline-panel></timeline-panel></div>
        <icon-dock></icon-dock>
        <div class="side"><adjust-panel></adjust-panel><layers-panel></layers-panel></div>
      </div>
    `;
  }
}
